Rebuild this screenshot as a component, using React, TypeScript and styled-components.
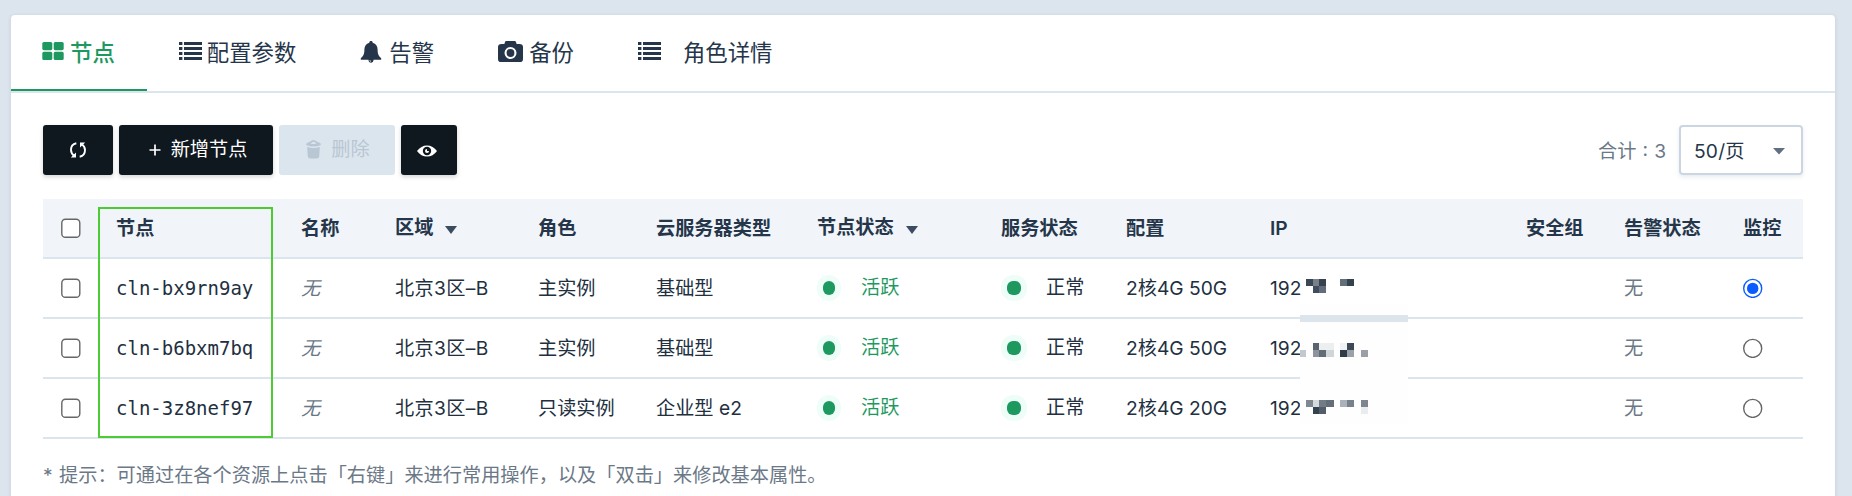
import React from "react";
import styled, { createGlobalStyle, css } from "styled-components";

const color = {
  page: "#dce4ed",
  line: "#dbe5ed",
  ink: "#26364a",
  text: "#222f3f",
  muted: "#6b7887",
  green: "#1d9960",
  dark: "#10181f",
  head: "#f1f5f9",
};

const GlobalStyle = createGlobalStyle`
  * { box-sizing: border-box; }
  body {
    margin: 0;
    background: ${color.page};
    color: ${color.text};
    font-family: Inter, "Noto Sans CJK SC", sans-serif;
    font-size: 19.2px;
    overflow: hidden;
  }
`;

const Page = styled.div`
  height: 496px;
  padding: 15px 17px 0 11px;
  overflow: hidden;
`;

const Panel = styled.main`
  height: 520px;
  background: #fff;
  border-radius: 4px;
  box-shadow: 0 1px 4px rgba(60, 90, 120, 0.14);
`;

const Tabs = styled.nav`
  display: flex;
  height: 78px;
  border-bottom: 2px solid ${color.line};
`;

const Tab = styled.div<{ $active?: boolean }>`
  display: flex;
  padding: 17px 32px 0;
  height: 76px;
  font-size: 22.4px;
  line-height: 42px;
  white-space: nowrap;
  color: ${color.ink};
  ${(p) =>
    p.$active &&
    css`
      color: ${color.green};
      font-weight: 500;
      border-bottom: 2px solid ${color.green};
    `}
`;

const TabIcon = styled.span<{ $width: number; $top?: number }>`
  display: flex;
  flex: none;
  width: ${(p) => p.$width}px;
  margin-top: ${(p) => p.$top ?? 10}px;
  svg {
    display: block;
    flex: none;
    overflow: visible;
  }
`;

const Content = styled.section`
  padding: 32px 32px 0;
`;

const Toolbar = styled.div`
  display: flex;
  gap: 6px;
  height: 50px;
  margin-bottom: 24px;
`;

const Button = styled.button<{ $width: number; $pad?: string; $disabled?: boolean }>`
  display: flex;
  align-items: center;
  justify-content: center;
  width: ${(p) => p.$width}px;
  height: 50px;
  padding: ${(p) => p.$pad ?? "0 0 4px"};
  border: 0;
  border-radius: 3px;
  font: inherit;
  color: ${(p) => (p.$disabled ? "#b9c6d3" : "#fff")};
  background: ${(p) => (p.$disabled ? color.line : color.dark)};
  box-shadow: ${(p) => (p.$disabled ? "none" : "0 2px 4px rgba(16, 24, 31, 0.18)")};
`;

const ButtonLabel = styled.span`
  margin-left: 10px;
`;

const ButtonGlyph = styled.svg`
  display: block;
  margin-top: 4px;
`;

const Pager = styled.div`
  display: flex;
  align-items: center;
  margin-left: auto;
  color: ${color.muted};
`;

const Total = styled.span`
  margin-right: 13px;
  white-space: pre;
  word-spacing: 0.7px;
`;

const Select = styled.div`
  display: flex;
  align-items: center;
  justify-content: space-between;
  width: 124px;
  height: 50px;
  padding: 0 16px 0 13px;
  border: 2px solid #cbd6e2;
  border-radius: 4px;
  color: ${color.ink};
  letter-spacing: 0.2px;
  box-shadow: 0 2px 4px rgba(60, 90, 120, 0.12);
`;

const SelectArrow = styled.svg`
  margin-top: 3px;
`;

const Table = styled.div`
  position: relative;
`;

const Row = styled.div<{ $head?: boolean }>`
  display: grid;
  grid-template-columns: 55px 185px 94px 143px 118px 161px 184px 125px 144px 256px 98px 119px 78px;
  height: 60px;
  border-bottom: 2px solid ${color.line};
  line-height: 58px;
  ${(p) =>
    p.$head &&
    css`
      background: ${color.head};
      color: ${color.ink};
      font-weight: 600;
    `}
`;

const Cell = styled.div<{ $kind?: "mono" | "none" | "noneItalic" | "raised" | "zone" }>`
  display: flex;
  align-items: center;
  height: 58px;
  padding-left: 18px;
  white-space: pre;
  ${(p) => p.$kind === "mono" && css`font-family: "DejaVu Sans Mono", monospace; font-size: 19px;`}
  ${(p) => p.$kind === "none" && css`color: ${color.muted};`}
  ${(p) => p.$kind === "noneItalic" && css`color: ${color.muted}; font-style: italic;`}
  ${(p) => p.$kind === "raised" && css`padding-bottom: 3px;`}
  ${(p) => p.$kind === "zone" && css`letter-spacing: 0.35px;`}
`;

const Dot = styled.span<{ $w: number; $gap: number }>`
  flex: none;
  width: ${(p) => p.$w}px;
  height: 14px;
  margin: 0 ${(p) => p.$gap}px 0 6px;
  border-radius: 6px;
  background: ${color.green};
  box-shadow: 0 0 0 6px #effdf9;
`;

const State = styled.span<{ $green?: boolean }>`
  margin-bottom: 3px;
  color: ${(p) => (p.$green ? color.green : "inherit")};
`;

const SortArrow = styled.svg`
  margin: 6px 0 0 12px;
`;

const Highlight = styled.div`
  position: absolute;
  left: 54.6px;
  top: 8px;
  width: 175.4px;
  height: 231px;
  border: 2px solid #4ccb32;
`;

const Mosaic = styled.svg`
  position: absolute;
  left: 1257px;
  top: 65px;
`;

const Hint = styled.p`
  margin: 17px 0 0;
  line-height: 38px;
  color: ${color.muted};
  white-space: pre;
  word-spacing: 1px;
`;

const Checkbox = () => (
  <svg width="20" height="20" viewBox="0 0 20 20">
    <rect x="0.8" y="1.3" width="18" height="18" rx="3.6" fill="#fff" stroke="#666" strokeWidth="1.4" />
  </svg>
);

const Radio = ({ on }: { on: boolean }) => (
  <svg width="20" height="20" viewBox="0 0 20 20">
    <circle cx="9.700" cy="10.400" r="9" fill="#fff" stroke={on ? "#0b5cff" : "#666"} strokeWidth="1.4" />
    {on && <circle cx="9.700" cy="10.400" r="5.700" fill="#0b5cff" />}
  </svg>
);

const GridIcon = () => (
  <svg width="21" height="18" viewBox="0 0 21 18" fill="currentColor">
    <rect x="-.7" y="0" width="10" height="8.2" rx="1.6" />
    <rect x="10.700" y="0" width="10" height="8.2" rx="1.6" />
    <rect x="-.7" y="9.8" width="10" height="8.2" rx="1.6" />
    <rect x="10.700" y="9.8" width="10" height="8.2" rx="1.6" />
  </svg>
);

const ListIcon = () => (
  <svg width="23" height="18" viewBox="0 0 23 18" fill="currentColor">
    {[0, 5, 10, 15].map((y) => (
      <g key={y}>
        <rect x="0" y={y} width="3.4" height="3" />
        <rect x="5" y={y} width="18" height="3" />
      </g>
    ))}
  </svg>
);

const BellIcon = () => (
  <svg width="22" height="22" viewBox="0 0 22 22" fill="currentColor">
    <path d="M11 0C9.900 0 9.300.700 9.300 1.700C6 2.700 4.400 5.200 4.400 8.500C4.400 12.800 3.600 14.600 .8 17.300V18.700H8.400C8.600 20.500 9.600 21.800 11 21.800S13.400 20.500 13.600 18.700H21.200V17.300C18.400 14.600 17.600 12.800 17.600 8.500C17.600 5.200 16 2.700 12.700 1.700C12.700.700 12.100 0 11 0Z" />
    <path d="M9.900 19.100C9.900 20 10.300 20.500 11 20.700" fill="none" stroke="#fff" strokeWidth=".7" />
  </svg>
);

const CameraIcon = () => (
  <svg width="25" height="22" viewBox="0 0 25 22" fill="currentColor">
    <path
      fillRule="evenodd"
      d="M8.200 0H16.800Q17.600 0 18 1.100L18.600 2.900H21.500Q25 2.900 25 6.100V17.900Q25 21.100 21.500 21.100H3.500Q0 21.100 0 17.900V6.100Q0 2.900 3.500 2.900H6.400L7 1.100Q7.400 0 8.200 0ZM12.500 6A6 6 0 1 0 12.500 18A6 6 0 1 0 12.500 6Z"
    />
    <circle cx="12.500" cy="12" r="3.900" />
  </svg>
);

const RefreshIcon = () => (
  <ButtonGlyph width="16" height="16" viewBox="0 0 16 16" fill="none" stroke="currentColor" strokeWidth="1.900">
    <path d="M6.300 1.300C2.500 2 1 5 1 8C1 10.500 2.200 12.500 4.500 14" />
    <path d="M9.700 14.700C13.500 14 15 11 15 8C15 5.500 13.800 3.500 11.500 2" />
    <path d="M.8 15.600H6V10.400Z M15.200 .4H10V5.600Z" fill="currentColor" stroke="none" />
  </ButtonGlyph>
);

const PlusIcon = () => (
  <ButtonGlyph width="12" height="12" viewBox="0 0 12 12" stroke="currentColor" strokeWidth="1.700">
    <path d="M6 .5V11.500M.5 6H11.500" />
  </ButtonGlyph>
);

const TrashIcon = () => (
  <ButtonGlyph width="15" height="19" viewBox="0 0 15 19" fill="currentColor">
    <path d="M7.500 0C8.600 0 9.600.8 11 1.700L14 3.100Q15 3.600 14.800 5Q7.500 8 .2 5Q0 3.600 1 3.100L4 1.700C5.400.8 6.400 0 7.500 0ZM7.500 1.400L4.500 3.400Q7.500 4.400 10.500 3.400Z" fillRule="evenodd" />
    <path d="M1.200 7Q7.500 9.200 13.800 7L13.200 16.600Q13 18.500 10.800 18.500H4.200Q2 18.500 1.800 16.600Z" />
  </ButtonGlyph>
);

const EyeIcon = () => (
  <ButtonGlyph width="20" height="12" viewBox="0 0 20 12">
    <path d="M0 6Q4 .4 10 .4T20 6Q16 11.600 10 11.600T0 6Z" fill="currentColor" />
    <circle cx="10" cy="6" r="4.200" fill={color.dark} />
    <circle cx="10" cy="6" r="2" fill="currentColor" />
    <path d="M10 3.500V6H12.500V3.500Z" fill={color.dark} />
  </ButtonGlyph>
);

const Sort = () => (
  <SortArrow width="12" height="8" viewBox="0 0 12 8">
    <path d="M0 0H12L6 8Z" fill="#3c4c60" />
  </SortArrow>
);

const blocks: [number, number, number, number, string][] = [
  [0, 51, 108, 7, "#dce4ec"],
  [6, 15, 7, 7, "#3b4755"],
  [13, 15, 6, 7, "#78818a"],
  [19, 15, 7, 7, "#36434f"],
  [13, 22, 6, 7, "#414d5d"],
  [19, 22, 7, 7, "#616c7c"],
  [40, 15, 7, 7, "#626e78"],
  [47, 15, 7, 7, "#33424c"],
  [0, 86, 6, 7, "#c2c8cd"],
  [13, 79, 6, 7, "#596470"],
  [19, 79, 15, 7, "#eceef0"],
  [13, 86, 6, 7, "#8d949d"],
  [19, 86, 7, 7, "#5f6d77"],
  [26, 86, 8, 7, "#d0d5d8"],
  [40, 79, 7, 7, "#f0f1f3"],
  [47, 79, 7, 7, "#3e4958"],
  [40, 86, 7, 7, "#2e3c48"],
  [47, 86, 7, 7, "#9ba1ab"],
  [61, 86, 7, 7, "#9a9fa8"],
  [6, 136, 7, 7, "#7f8791"],
  [13, 136, 6, 7, "#d5dadd"],
  [19, 136, 7, 7, "#727c86"],
  [26, 136, 8, 7, "#636e79"],
  [13, 143, 6, 7, "#33424e"],
  [19, 143, 7, 7, "#515d6b"],
  [40, 136, 7, 7, "#abb1b8"],
  [47, 136, 7, 7, "#77818c"],
  [61, 136, 7, 7, "#7c8590"],
  [61, 143, 7, 7, "#eaecee"],
];

const nodes = [
  { id: "cln-bx9rn9ay", role: "主实例", type: "基础型", spec: "2核4G 50G", watched: true },
  { id: "cln-b6bxm7bq", role: "主实例", type: "基础型", spec: "2核4G 50G", watched: false },
  { id: "cln-3z8nef97", role: "只读实例", type: "企业型 e2", spec: "2核4G 20G", watched: false },
];

export default function App() {
  return (
    <Page>
      <GlobalStyle />
      <Panel>
        <Tabs>
          <Tab $active>
            <TabIcon $width={27}><GridIcon /></TabIcon>节点
          </Tab>
          <Tab><TabIcon $width={28}><ListIcon /></TabIcon>配置参数</Tab>
          <Tab><TabIcon $width={29} $top={9}><BellIcon /></TabIcon>告警</Tab>
          <Tab><TabIcon $width={31} $top={9}><CameraIcon /></TabIcon>备份</Tab>
          <Tab><TabIcon $width={45}><ListIcon /></TabIcon>角色详情</Tab>
        </Tabs>
        <Content>
          <Toolbar>
            <Button $width={70}><RefreshIcon /></Button>
            <Button $width={154} $pad="0 0 5px 4px"><PlusIcon /><ButtonLabel>新增节点</ButtonLabel></Button>
            <Button $width={116} $pad="0 0 5px 2px" $disabled><TrashIcon /><ButtonLabel>删除</ButtonLabel></Button>
            <Button $width={56} $pad="0 4px 3px 0"><EyeIcon /></Button>
            <Pager>
              <Total>合计 : 3</Total>
              <Select>
                50/页
                <SelectArrow width="12" height="7" viewBox="0 0 12 7">
                  <path d="M0 0H12L6 6.500Z" fill="#607082" />
                </SelectArrow>
              </Select>
            </Pager>
          </Toolbar>
          <Table>
            <Row $head>
              <Cell><Checkbox /></Cell>
              <Cell>节点</Cell>
              <Cell>名称</Cell>
              <Cell $kind="raised">区域<Sort /></Cell>
              <Cell>角色</Cell>
              <Cell>云服务器类型</Cell>
              <Cell $kind="raised">节点状态<Sort /></Cell>
              <Cell>服务状态</Cell>
              <Cell>配置</Cell>
              <Cell>IP</Cell>
              <Cell>安全组</Cell>
              <Cell>告警状态</Cell>
              <Cell>监控</Cell>
            </Row>
            {nodes.map((n) => (
              <Row key={n.id}>
                <Cell><Checkbox /></Cell>
                <Cell $kind="mono">{n.id}</Cell>
                <Cell $kind="noneItalic">无</Cell>
                <Cell $kind="zone">北京3区–B</Cell>
                <Cell>{n.role}</Cell>
                <Cell>{n.type}</Cell>
                <Cell><Dot $w={12} $gap={26} /><State $green>活跃</State></Cell>
                <Cell><Dot $w={14} $gap={25} /><State>正常</State></Cell>
                <Cell>{n.spec}</Cell>
                <Cell>192</Cell>
                <Cell />
                <Cell $kind="none">无</Cell>
                <Cell><Radio on={n.watched} /></Cell>
              </Row>
            ))}
            <Mosaic width="108" height="160" viewBox="0 0 108 160" shapeRendering="crispEdges">
              <rect y="40" width="108" height="120" fill="#fefefe" />
              {blocks.map(([x, y, w, h, fill]) => (
                <rect key={`${x}-${y}`} x={x} y={y} width={w} height={h} fill={fill} />
              ))}
            </Mosaic>
            <Highlight />
          </Table>
          <Hint>* 提示：可通过在各个资源上点击「右键」来进行常用操作，以及「双击」来修改基本属性。</Hint>
        </Content>
      </Panel>
    </Page>
  );
}
